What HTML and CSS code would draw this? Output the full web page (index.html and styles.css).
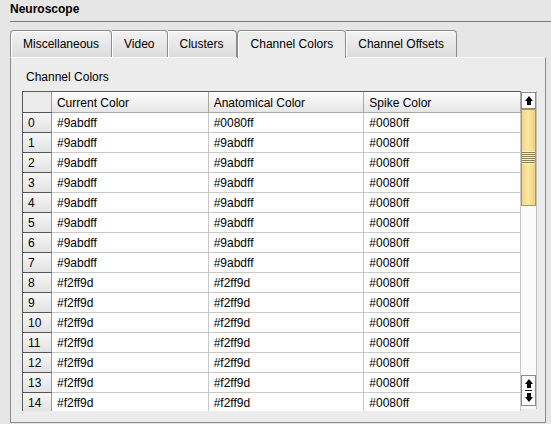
FILE: index.html
```html
<!DOCTYPE html>
<html>
<head>
<meta charset="utf-8">
<link rel="stylesheet" href="styles.css">
</head>
<body>
<div class="title">Neuroscope</div>
<div class="tabs">
  <div class="tab">Miscellaneous</div>
  <div class="tab">Video</div>
  <div class="tab">Clusters</div>
  <div class="tab active">Channel Colors</div>
  <div class="tab">Channel Offsets</div>
</div>
<div class="panel">
  <div class="group-label">Channel Colors</div>
  <div class="table-frame">
    <div class="grid">
      <div class="row head">
        <div class="rh"></div>
        <div class="c c1">Current Color</div>
        <div class="c c2">Anatomical Color</div>
        <div class="c c3">Spike Color</div>
      </div>
      <div class="row"><div class="rh">0</div><div class="c c1">#9abdff</div><div class="c c2">#0080ff</div><div class="c c3">#0080ff</div></div>
      <div class="row"><div class="rh">1</div><div class="c c1">#9abdff</div><div class="c c2">#9abdff</div><div class="c c3">#0080ff</div></div>
      <div class="row"><div class="rh">2</div><div class="c c1">#9abdff</div><div class="c c2">#9abdff</div><div class="c c3">#0080ff</div></div>
      <div class="row"><div class="rh">3</div><div class="c c1">#9abdff</div><div class="c c2">#9abdff</div><div class="c c3">#0080ff</div></div>
      <div class="row"><div class="rh">4</div><div class="c c1">#9abdff</div><div class="c c2">#9abdff</div><div class="c c3">#0080ff</div></div>
      <div class="row"><div class="rh">5</div><div class="c c1">#9abdff</div><div class="c c2">#9abdff</div><div class="c c3">#0080ff</div></div>
      <div class="row"><div class="rh">6</div><div class="c c1">#9abdff</div><div class="c c2">#9abdff</div><div class="c c3">#0080ff</div></div>
      <div class="row"><div class="rh">7</div><div class="c c1">#9abdff</div><div class="c c2">#9abdff</div><div class="c c3">#0080ff</div></div>
      <div class="row"><div class="rh">8</div><div class="c c1">#f2ff9d</div><div class="c c2">#f2ff9d</div><div class="c c3">#0080ff</div></div>
      <div class="row"><div class="rh">9</div><div class="c c1">#f2ff9d</div><div class="c c2">#f2ff9d</div><div class="c c3">#0080ff</div></div>
      <div class="row"><div class="rh">10</div><div class="c c1">#f2ff9d</div><div class="c c2">#f2ff9d</div><div class="c c3">#0080ff</div></div>
      <div class="row"><div class="rh">11</div><div class="c c1">#f2ff9d</div><div class="c c2">#f2ff9d</div><div class="c c3">#0080ff</div></div>
      <div class="row"><div class="rh">12</div><div class="c c1">#f2ff9d</div><div class="c c2">#f2ff9d</div><div class="c c3">#0080ff</div></div>
      <div class="row"><div class="rh">13</div><div class="c c1">#f2ff9d</div><div class="c c2">#f2ff9d</div><div class="c c3">#0080ff</div></div>
      <div class="row"><div class="rh">14</div><div class="c c1">#f2ff9d</div><div class="c c2">#f2ff9d</div><div class="c c3">#0080ff</div></div>
    </div>
    <div class="scrollbar">
      <div class="sb-btn"><svg width="10" height="11" viewBox="0 0 10 11"><path d="M5 1 L9 6 L7 6 L7 10 L3 10 L3 6 L1 6 Z" fill="#000"/></svg></div>
      <div class="slider">
        <div class="grip"></div>
      </div>
      <div class="track"></div>
      <div class="sb-pair">
        <div class="sb-half"><svg width="10" height="10" viewBox="0 0 10 10"><path d="M5 1 L9 6 L7 6 L7 10 L3 10 L3 6 L1 6 Z" fill="#000"/></svg></div>
        <div class="sb-sep"></div>
        <div class="sb-half"><svg width="10" height="10" viewBox="0 0 10 10"><path d="M5 9 L9 4 L7 4 L7 0 L3 0 L3 4 L1 4 Z" fill="#000"/></svg></div>
      </div>
    </div>
  </div>
</div>
</body>
</html>
```

FILE: styles.css
```css
html, body {
  margin: 0;
  padding: 0;
}
body {
  width: 551px;
  height: 424px;
  overflow: hidden;
  background: #e6e6e6;
  font-family: "Liberation Sans", Arial, sans-serif;
  font-size: 12px;
  color: #000;
}
.title {
  margin-left: 10px;
  height: 21px;
  border-bottom: 1px solid #7a7a7a;
  font-weight: bold;
  font-size: 12px;
  line-height: 19px;
}
.tabs {
  display: flex;
  align-items: flex-end;
  margin-top: 7px;
  margin-left: 10px;
  height: 28px;
}
.tab {
  height: 26px;
  line-height: 26px;
  padding: 0 12px;
  border: 1px solid #8c8c8c;
  border-bottom: none;
  border-left: none;
  border-radius: 0 4px 0 0;
  background: linear-gradient(#f3f3f3, #dcdcdc);
  box-shadow: inset 1px 1px 0 #fff;
}
.tab:first-child {
  border-left: 1px solid #8c8c8c;
  border-radius: 4px 4px 0 0;
}
.tab.active {
  height: 27px;
  line-height: 27px;
  border-left: 1px solid #8c8c8c;
  border-radius: 4px 4px 0 0;
  background: #ececec;
  margin-bottom: -1px;
  position: relative;
  z-index: 1;
  padding: 0 12px 0 13px;
}
.panel {
  margin-left: 10px;
  width: 534px;
  height: 364px;
  border: 1px solid #8c8c8c;
  border-top-color: #fafafa;
  background: #ececec;
}
.group-label {
  margin: 12px 0 0 15px;
  height: 21px;
  line-height: 14px;
}
.table-frame {
  display: flex;
  margin-left: 11px;
  width: 515px;
  height: 320px;
  overflow: hidden;
}
.grid {
  width: 499px;
  border-left: 1px solid #5a5a5a;
  border-top: 1px solid #5a5a5a;
  box-sizing: border-box;
  background: #fff;
}
.row {
  display: flex;
  height: 20px;
  border-bottom: 1px solid #c8c8c8;
  box-sizing: border-box;
}
.row.head {
  height: 21px;
  border-bottom: 1px solid #a8a8a8;
}
.rh {
  width: 29px;
  padding-left: 5px;
  padding-top: 1px;
  box-sizing: border-box;
  line-height: 19px;
  background: linear-gradient(#f6f6f6, #e2e2e2);
  border-top: 1px solid #555;
  border-right: 1px solid #9a9a9a;
  margin-top: -1px;
  height: 20px;
}
.head .rh {
  border-top: none;
  margin-top: 0;
  background: #ececec;
  height: 20px;
  border-right: 1px solid #9a9a9a;
}
.c {
  padding-left: 5px;
  padding-top: 1px;
  line-height: 18px;
  box-sizing: border-box;
  border-right: 1px solid #c8c8c8;
  white-space: nowrap;
}
.head .c {
  background: linear-gradient(#fdfdfd, #e6e6e6);
  border-right: 1px solid #a8a8a8;
  line-height: 20px;
}
.c1 { width: 157px; }
.c2 { width: 156px; }
.c3 { width: 157px; }
.scrollbar {
  width: 16px;
  display: flex;
  flex-direction: column;
  background: #f6f6f6;
  border-right: 1px solid #bdbdbd;
  box-sizing: border-box;
  height: 318px;
}
.sb-btn {
  height: 17px;
  margin-top: 1px;
  display: flex;
  align-items: center;
  justify-content: center;
  background: #fff;
  border: 1px solid #8a8a8a;
  box-sizing: border-box;
}
.slider {
  height: 97px;
  box-sizing: border-box;
  border: 1px solid #a49a6c;
  background: linear-gradient(90deg, #f2d580, #fbe8a6 45%, #f0d27c);
  display: flex;
  flex-direction: column;
  justify-content: center;
}
.grip {
  height: 13px;
  background: repeating-linear-gradient(#fff2c4 0 1px, #8c8050 1px 2px);
}
.track {
  flex: 1;
  background: #fbfbfb;
}
.sb-pair {
  border: 1px solid #8a8a8a;
  background: #fff;
  margin-bottom: 3px;
  display: flex;
  flex-direction: column;
  align-items: center;
  padding: 2px 0;
  gap: 2px;
}
.sb-half {
  height: 10px;
  display: flex;
}
.sb-sep {
  width: 7px;
  height: 1px;
  background: #222;
}
```
